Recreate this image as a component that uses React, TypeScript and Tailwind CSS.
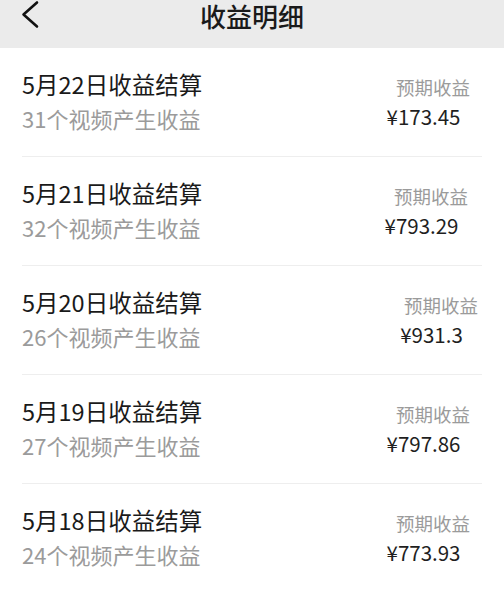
const records = [
  { date: '5月22日', videos: 31, amount: '173.45', shift: 'translate-x-0' },
  { date: '5月21日', videos: 32, amount: '793.29', shift: '-translate-x-[2px]' },
  { date: '5月20日', videos: 26, amount: '931.3', shift: 'translate-x-[8px]' },
  { date: '5月19日', videos: 27, amount: '797.86', shift: 'translate-x-0' },
  { date: '5月18日', videos: 24, amount: '773.93', shift: 'translate-x-0' },
]

function BackIcon() {
  return (
    <svg width="20" height="30" viewBox="0 0 20 30" fill="none">
      <polyline
        points="16,2.5 2.5,14.5 16,26.5"
        stroke="#111"
        strokeWidth="2.6"
        strokeLinecap="round"
        strokeLinejoin="round"
      />
    </svg>
  )
}

export default function App() {
  return (
    <div
      className="w-[504px] h-[590px] overflow-hidden bg-white"
      style={{ fontFamily: '"Noto Sans CJK SC", "Noto Sans", sans-serif' }}
    >
      {/* Header */}
      <div className="h-[48px] bg-[#ebebeb] flex items-start">
        <button className="w-[60px] pl-[21px] flex items-start">
          <BackIcon />
        </button>
        <h1 className="flex-1 text-center text-[26px] leading-[32px] font-medium text-[#1a1a1a]">
          收益明细
        </h1>
        <div className="w-[60px]" />
      </div>

      {/* Records */}
      <div>
        {records.map((r) => (
          <div
            key={r.date}
            className="mx-[22px] pt-[19px] pb-[21px] border-b border-[#eeeeee] flex items-start justify-between"
          >
            <div>
              <div className="text-[23.5px] leading-[34px] text-[#1a1a1a]">{r.date}收益结算</div>
              <div className="text-[22px] leading-[34px] text-[#9b9b9b]">{r.videos}个视频产生收益</div>
            </div>
            <div className={`w-[90px] mr-[4px] mt-[6px] flex flex-col items-center ${r.shift}`}>
              <div className="text-[18.5px] leading-[29px] text-[#9b9b9b]">预期收益</div>
              <div className="mr-[19px] text-[20.5px] leading-[29px] text-[#1f1f1f]">¥{r.amount}</div>
            </div>
          </div>
        ))}
      </div>
    </div>
  )
}
